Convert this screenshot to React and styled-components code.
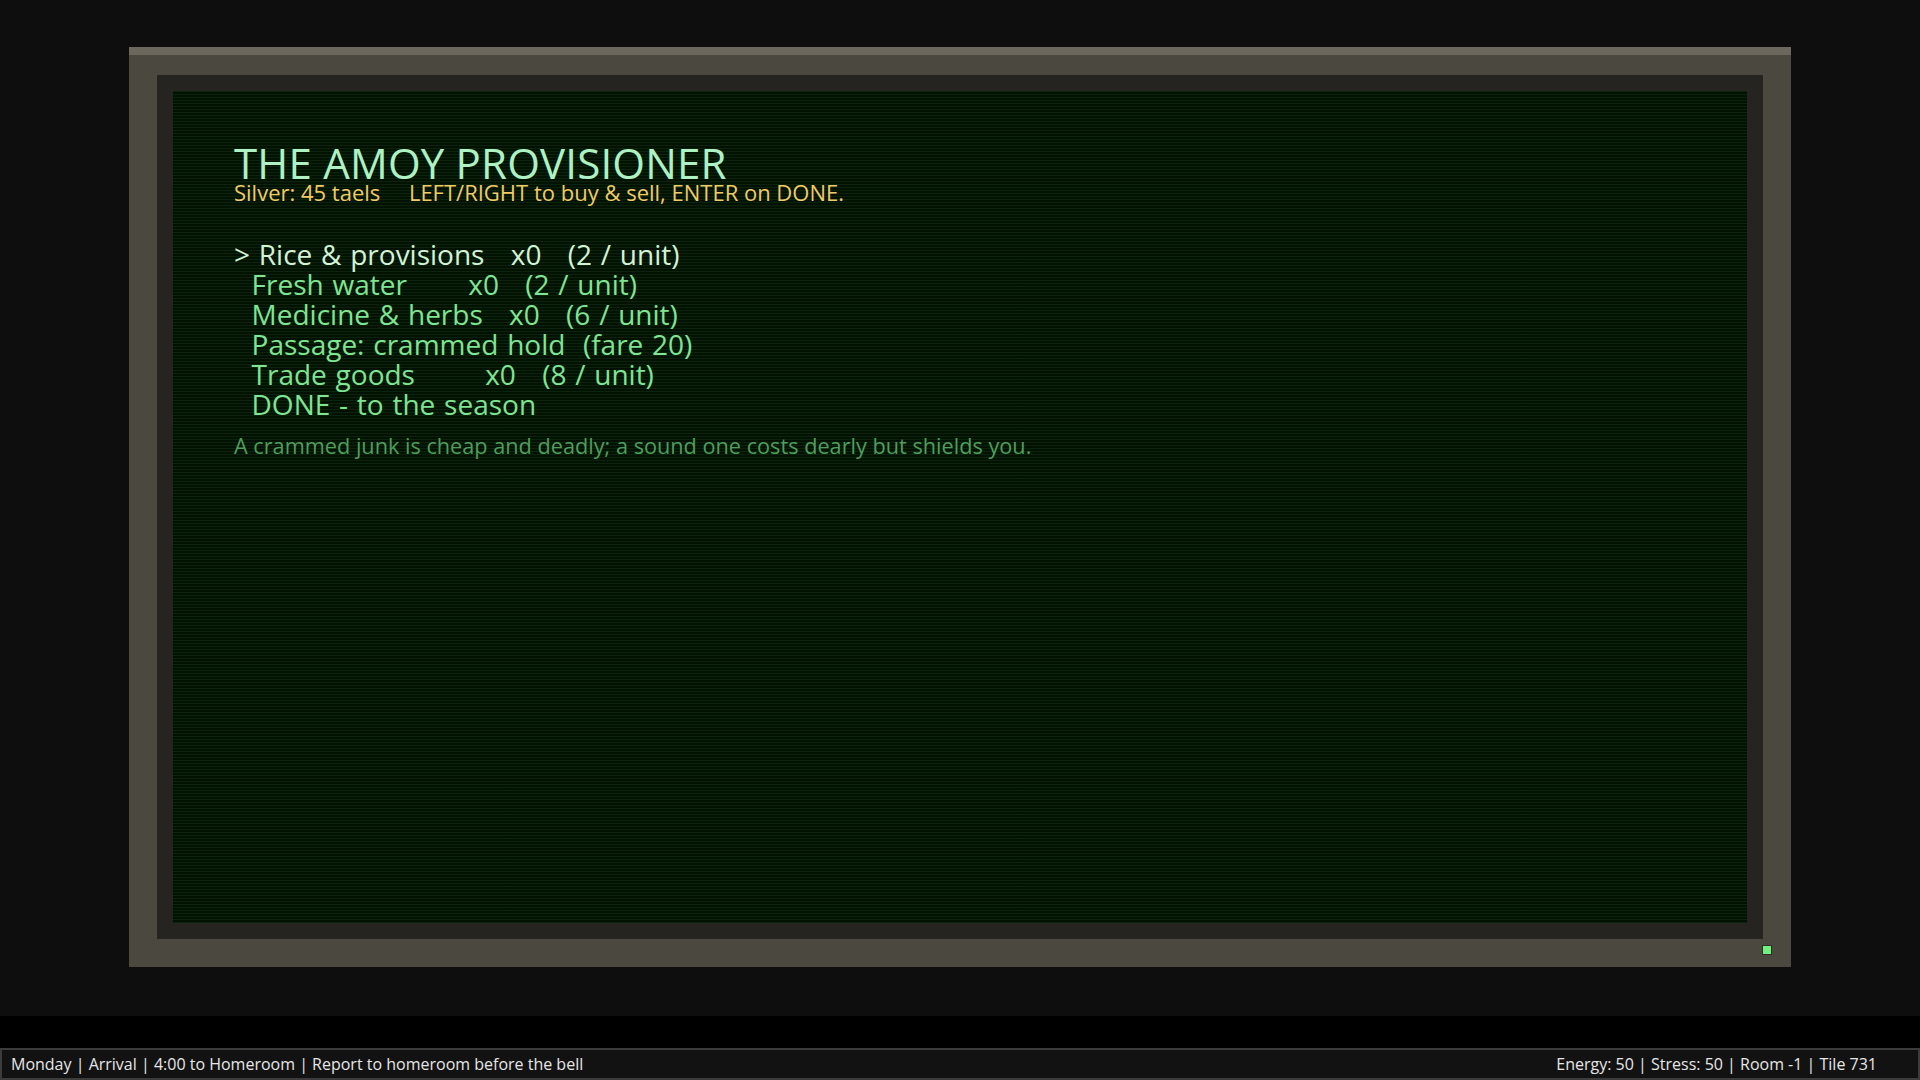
import React from "react";
import styled, { createGlobalStyle } from "styled-components";

const Global = createGlobalStyle`
  html, body { margin: 0; padding: 0; background: #0d0d0d; }
  body { font-family: "Open Sans", "Noto Sans", sans-serif; overflow: hidden; }
  #root { height: 100vh; }
`;

const Page = styled.div`
  display: flex;
  flex-direction: column;
  height: 100vh;
`;

const Stage = styled.div`
  height: 1016px;
  background: #0e0e0e;
  display: flex;
  justify-content: center;
  align-items: flex-start;
  padding-top: 47px;
  box-sizing: border-box;
`;

const Bezel = styled.div`
  position: relative;
  width: 1662px;
  box-sizing: border-box;
  background: #4b4840;
  border-top: 8px solid #6c685d;
  padding: 20px 28px 28px;
`;

const Frame = styled.div`
  background: #252420;
  padding: 16px;
`;

const Screen = styled.div`
  height: 832px;
  box-sizing: border-box;
  padding: 56px 61px 44px;
  background-color: #021202;
  background-image: repeating-linear-gradient(
    to bottom,
    rgba(20, 50, 20, 0.55) 0px,
    rgba(20, 50, 20, 0.55) 1px,
    transparent 1px,
    transparent 3px
  );
  display: flex;
  flex-direction: column;
  align-items: flex-start;
`;

const Title = styled.h1`
  margin: 0;
  font-weight: 400;
  font-size: 42px;
  line-height: 32px;
  color: #aef2c4;
  letter-spacing: 0.2px;
`;

const Sub = styled.div`
  font-size: 22px;
  line-height: 26px;
  color: #f0cb66;
  white-space: pre;
`;

const Menu = styled.div`
  margin-top: 34px;
  display: flex;
  flex-direction: column;
`;

const Item = styled.div`
  font-size: 28px;
  line-height: 30px;
  white-space: pre;
  word-spacing: 1.5px;
  color: ${(p) => (p.$active ? "#d4f3d6" : "#7fe592")};
`;

const Hint = styled.div`
  margin-top: 15px;
  font-size: 21.7px;
  line-height: 24px;
  color: #4f9e5e;
`;

const Led = styled.div`
  position: absolute;
  right: 20px;
  bottom: 13px;
  width: 8px;
  height: 8px;
  background: #6ff27c;
  box-shadow: 0 0 0 1px rgba(20, 20, 20, 0.5);
`;

const Gap = styled.div`
  height: 32px;
  background: #000;
`;

const StatusBar = styled.div`
  height: 32px;
  box-sizing: border-box;
  border: 2px solid #3c3c3c;
  background: #121212;
  display: flex;
  align-items: center;
  justify-content: space-between;
  padding: 0 41px 0 9px;
  color: #e6e6e6;
  font-size: 16px;
`;

const items = [
  { t: "> Rice & provisions   x0   (2 / unit)", a: true },
  { t: "  Fresh water       x0   (2 / unit)" },
  { t: "  Medicine & herbs   x0   (6 / unit)" },
  { t: "  Passage: crammed hold  (fare 20)" },
  { t: "  Trade goods        x0   (8 / unit)" },
  { t: "  DONE - to the season" },
];

export default function App() {
  return (
    <Page>
      <Global />
      <Stage>
        <Bezel>
          <Frame>
            <Screen>
              <Title>THE AMOY PROVISIONER</Title>
              <Sub>{"Silver: 45 taels     LEFT/RIGHT to buy & sell, ENTER on DONE."}</Sub>
              <Menu>
                {items.map((it, i) => (
                  <Item key={i} $active={it.a}>
                    {it.t}
                  </Item>
                ))}
              </Menu>
              <Hint>A crammed junk is cheap and deadly; a sound one costs dearly but shields you.</Hint>
            </Screen>
          </Frame>
          <Led />
        </Bezel>
      </Stage>
      <Gap />
      <StatusBar>
        <span>Monday | Arrival | 4:00 to Homeroom | Report to homeroom before the bell</span>
        <span>Energy: 50 | Stress: 50 | Room -1 | Tile 731</span>
      </StatusBar>
    </Page>
  );
}
